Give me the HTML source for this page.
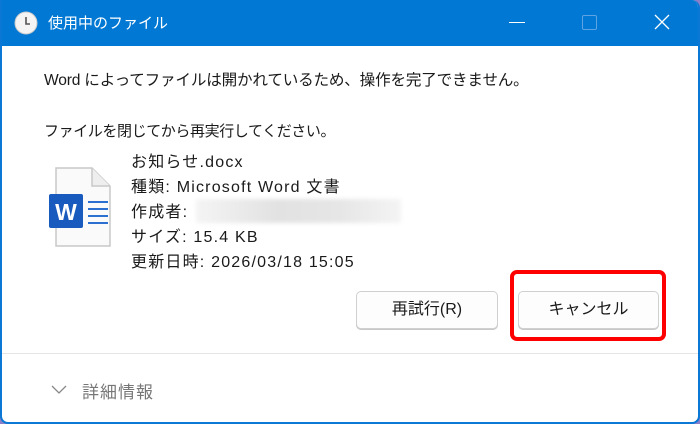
<!DOCTYPE html>
<html><head><meta charset="utf-8"><style>
html,body{margin:0;padding:0;width:700px;height:424px;overflow:hidden;background:#8a7fc8;}
*{box-sizing:border-box;}
.win{position:absolute;left:0;top:0;width:700px;height:424px;background:#fff;border:2px solid #0a78d4;border-top:none;border-radius:0 8px 8px 8px;overflow:hidden;font-family:"Liberation Sans","Noto Sans CJK JP",sans-serif;color:#1a1a1a;}
.title{position:absolute;left:0;top:0;width:700px;height:46px;background:#0078d4;color:#fff;font-size:15px;}
.t{position:absolute;white-space:nowrap;}
.btn{position:absolute;top:291px;height:38px;border:1px solid #d0d0d0;border-radius:5px;background:#fdfdfd;font-size:16px;text-align:center;line-height:36px;box-shadow:0 1px 0 #c8c8c8;}
</style></head><body>
<div class="win">
<div class="title">
<svg style="position:absolute;left:12px;top:11px" width="24" height="24" viewBox="0 0 24 24"><circle cx="12" cy="12" r="11" fill="#f4f4f4" stroke="#ccc"/><path d="M12 6v7h4" stroke="#555" stroke-width="1.6" fill="none"/></svg>
<div class="t" style="left:46px;top:12px;">使用中のファイル</div>
<div style="position:absolute;left:507px;top:22px;width:16px;height:1px;background:#fff"></div>
<div style="position:absolute;left:580px;top:15px;width:15px;height:15px;border:1px solid #5ea4e4;border-radius:2px"></div>
<svg style="position:absolute;left:652px;top:14px" width="16" height="16"><path d="M1 1L15 15M15 1L1 15" stroke="#fff" stroke-width="1.3"/></svg>
</div>
<div class="t" style="left:42px;top:68px;font-size:15.6px;letter-spacing:-0.2px;">Word によってファイルは開かれているため、操作を完了できません。</div>
<div class="t" style="left:42px;top:120px;font-size:15px;letter-spacing:-0.4px;">ファイルを閉じてから再実行してください。</div>
<svg style="position:absolute;left:46px;top:166px" width="64" height="82" viewBox="0 0 64 82">
<path d="M8 2H44L62 20V80H8Z" fill="#fafafa" stroke="#c8c8c8" stroke-width="1.5"/>
<path d="M44 2V20H62" fill="#eee" stroke="#c8c8c8" stroke-width="1.5"/>
<path d="M40 36h20M40 43h20M40 50h20M40 57h20" stroke="#2b6fd1" stroke-width="2"/>
<rect x="1" y="28" width="34" height="34" rx="2" fill="#185abd"/>
<text x="18" y="54" font-family="Liberation Sans" font-weight="bold" font-size="23" fill="#fff" text-anchor="middle">W</text>
</svg>
<div style="position:absolute;left:129px;top:150px;font-size:16px;line-height:25px;letter-spacing:1.2px;white-space:nowrap;">
<div>お知らせ.docx</div><div>種類: Microsoft Word 文書</div><div>作成者:</div><div>サイズ: 15.4 KB</div><div>更新日時: 2026/03/18 15:05</div></div>
<div style="position:absolute;left:194px;top:199px;width:205px;height:24px;background:linear-gradient(90deg,#f4f4f4,#e2e2e2 40%,#e6e6e6 70%,#f4f4f4);filter:blur(2px)"></div>
<div class="btn" style="left:354px;width:142px;">再試行(R)</div>
<div class="btn" style="left:516px;width:141px;">キャンセル</div>
<div style="position:absolute;left:508px;top:270px;width:156px;height:71px;border:4px solid #f00;border-radius:7px"></div>
<div style="position:absolute;left:0;top:353px;width:700px;height:1px;background:#e5e5e5"></div>
<svg style="position:absolute;left:48px;top:384px" width="18" height="12"><path d="M2 2L9 9L16 2" stroke="#888" stroke-width="1.3" fill="none"/></svg>
<div class="t" style="left:80px;top:378px;font-size:17px;letter-spacing:1px;color:#777;">詳細情報</div>
</div>
</body></html>
